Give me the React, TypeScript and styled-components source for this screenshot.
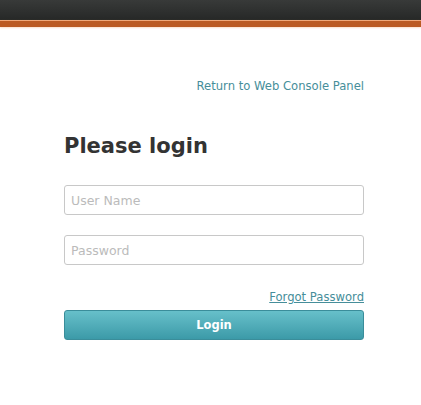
import React from "react";
import styled, { createGlobalStyle } from "styled-components";

const Global = createGlobalStyle`
  html, body { margin: 0; padding: 0; background: #fff; }
  body { font-family: "DejaVu Sans", Verdana, sans-serif; }
`;

const Header = styled.header`
  height: 20px;
  background: linear-gradient(#383a39, #262827);
`;

const Stripe = styled.div`
  height: 6px;
  border-top: 1px solid #f0a878;
  background: #bb5a22;
  box-shadow: 0 1px 2px rgba(240, 160, 100, 0.35);
`;

const Main = styled.main`
  width: 300px;
  margin-left: 64px;
  padding-top: 51px;
  display: flex;
  flex-direction: column;
`;

const TopLink = styled.a`
  align-self: flex-end;
  font-size: 11.6px;
  line-height: 16px;
  color: #468e9a;
  text-decoration: none;
`;

const Title = styled.h1`
  margin: 38px 0 25px;
  font-size: 21px;
  line-height: 28px;
  font-weight: bold;
  color: #333;
`;

const Field = styled.input`
  box-sizing: border-box;
  width: 100%;
  height: 30px;
  margin: 0 0 20px;
  padding: 0 6px;
  border: 1px solid #c8c8c8;
  border-radius: 3px;
  font-family: inherit;
  font-size: 12.5px;
  color: #555;
  outline: none;
  &::placeholder { color: #bbbbbb; }
`;

const Forgot = styled.a`
  align-self: flex-end;
  margin-top: 4px;
  font-size: 11.6px;
  line-height: 16px;
  color: #468e9a;
  text-decoration: underline;
`;

const Button = styled.button`
  margin-top: 5px;
  height: 30px;
  width: 100%;
  border: 1px solid #3a8d9a;
  border-radius: 3px;
  background: linear-gradient(#67c0ca, #3c9aa8);
  color: #fff;
  font-family: inherit;
  font-weight: bold;
  font-size: 11.5px;
  cursor: pointer;
`;

export default function App() {
  return (
    <>
      <Global />
      <Header />
      <Stripe />
      <Main>
        <TopLink href="#">Return to Web Console Panel</TopLink>
        <Title>Please login</Title>
        <Field placeholder="User Name" />
        <Field placeholder="Password" type="password" />
        <Forgot href="#">Forgot Password</Forgot>
        <Button>Login</Button>
      </Main>
    </>
  );
}
